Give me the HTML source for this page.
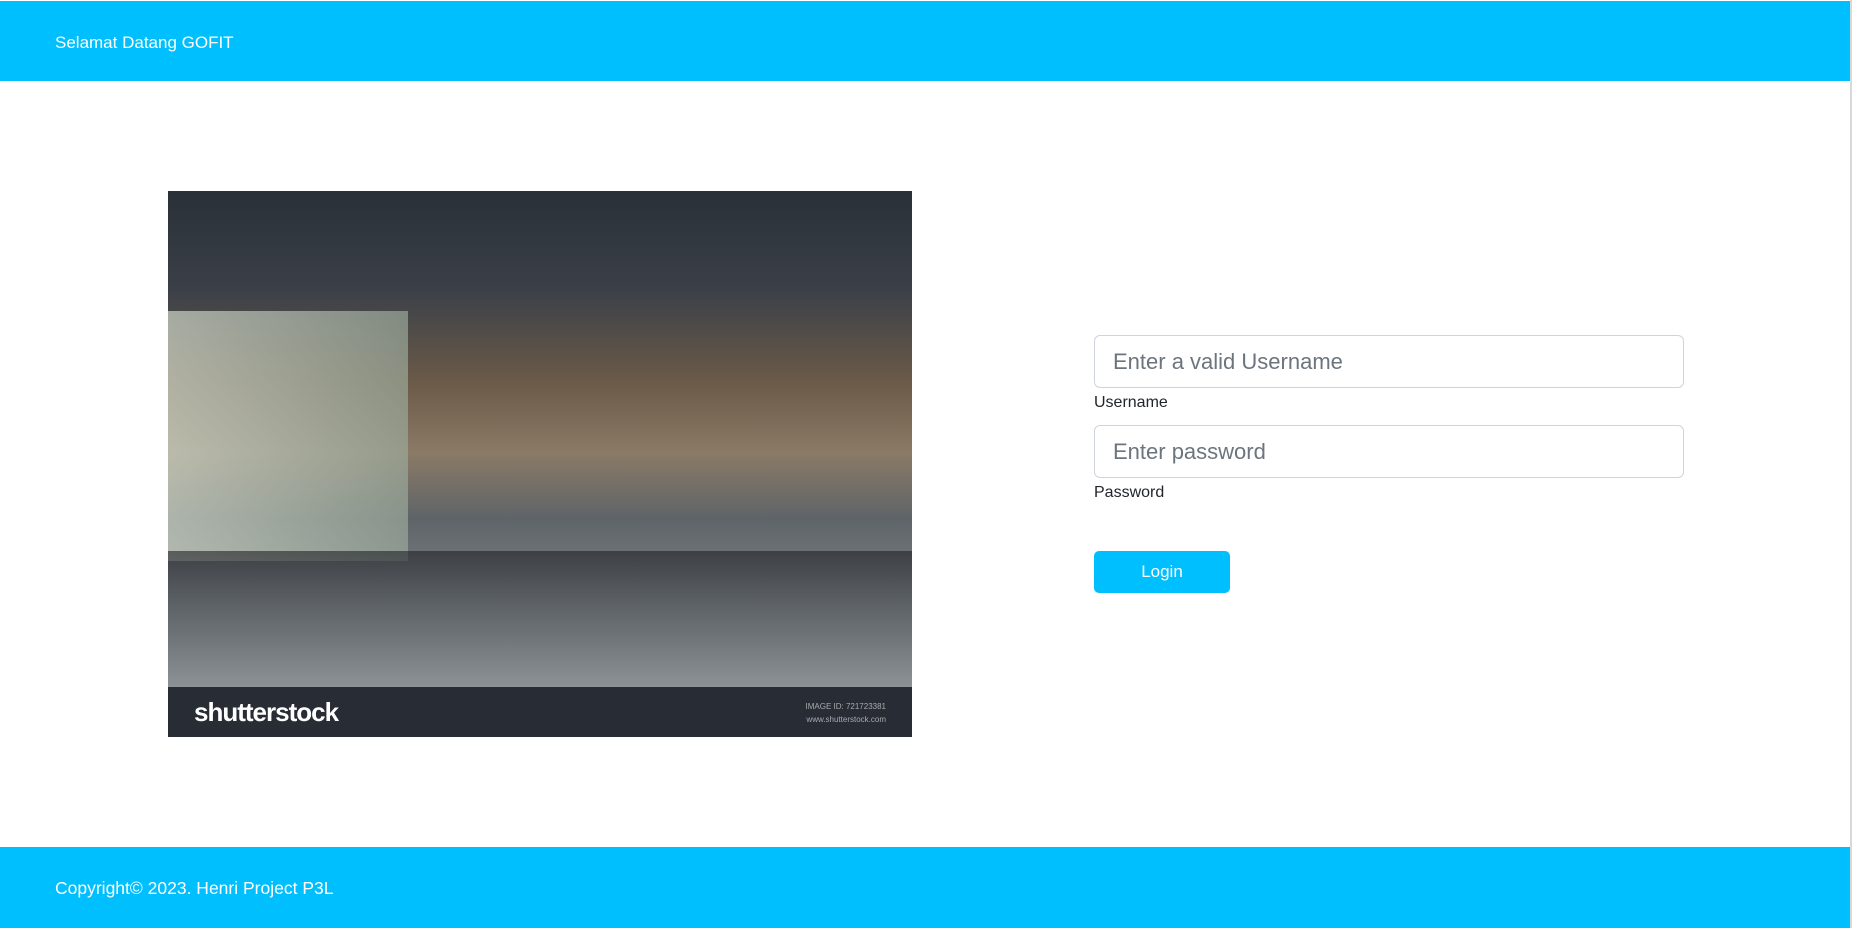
<!DOCTYPE html>
<html><head><style>
html,body{margin:0;padding:0;width:1862px;height:928px;overflow:hidden;background:#fff;font-family:"Liberation Sans",sans-serif;}
.hdr{position:absolute;left:0;top:1px;width:1850px;height:80px;background:#00bfff;}
.hdr span{position:absolute;left:55px;top:32px;color:#fff;font-size:17px;}
.vline{position:absolute;left:1850px;top:0;width:2px;height:928px;background:#d8d8d8;}
.img{position:absolute;left:168px;top:191px;width:744px;height:546px;overflow:hidden;
background:linear-gradient(180deg,#2a3038 0%,#3b4048 18%,#6b5a48 35%,#8a7a66 48%,#5f6468 60%,#7c8388 75%,#9aa0a4 100%);}
.img .win{position:absolute;left:0;top:120px;width:240px;height:250px;background:linear-gradient(90deg,#cfd6c8,#9aa89a);opacity:.7}
.img .band{position:absolute;left:0;bottom:0;width:100%;height:50px;background:#272c35;}
.img .band b{position:absolute;left:26px;top:10px;color:#fff;font-size:26px;font-weight:bold;letter-spacing:-1px}
.img .band i{position:absolute;right:26px;top:13px;color:#aaa;font-size:8px;font-style:normal;text-align:right;line-height:13px}
input{position:absolute;left:1094px;width:590px;height:53px;box-sizing:border-box;border:1px solid #ced4da;border-radius:6px;padding:0 18px;font-size:22px;font-family:"Liberation Sans",sans-serif;color:#6c757d}
input::placeholder{color:#6c757d}
.lbl{position:absolute;left:1094px;font-size:16px;color:#212529}
.btn{position:absolute;left:1094px;top:551px;width:136px;height:42px;background:#00bfff;border-radius:5px;color:#fff;font-size:17px;text-align:center;line-height:42px}
.ftr{position:absolute;left:0;top:847px;width:1850px;height:81px;background:#00bfff;}
.ftr span{position:absolute;left:55px;top:31px;color:#fff;font-size:17.5px;}
</style></head><body>
<div class="hdr"><span>Selamat Datang GOFIT</span></div>
<div class="vline"></div>
<div class="img"><div class="win"></div>
<div style="position:absolute;left:0;top:360px;width:100%;height:140px;background:linear-gradient(180deg,rgba(30,32,36,.6),rgba(140,146,150,.5))"></div>
<div class="band"><b>shutterstock</b><i>IMAGE ID: 721723381<br>www.shutterstock.com</i></div></div>
<input style="top:335px" placeholder="Enter a valid Username">
<div class="lbl" style="top:394px">Username</div>
<input style="top:425px" placeholder="Enter password">
<div class="lbl" style="top:484px">Password</div>
<div class="btn">Login</div>
<div class="ftr"><span>Copyright© 2023. Henri Project P3L</span></div>
</body></html>
